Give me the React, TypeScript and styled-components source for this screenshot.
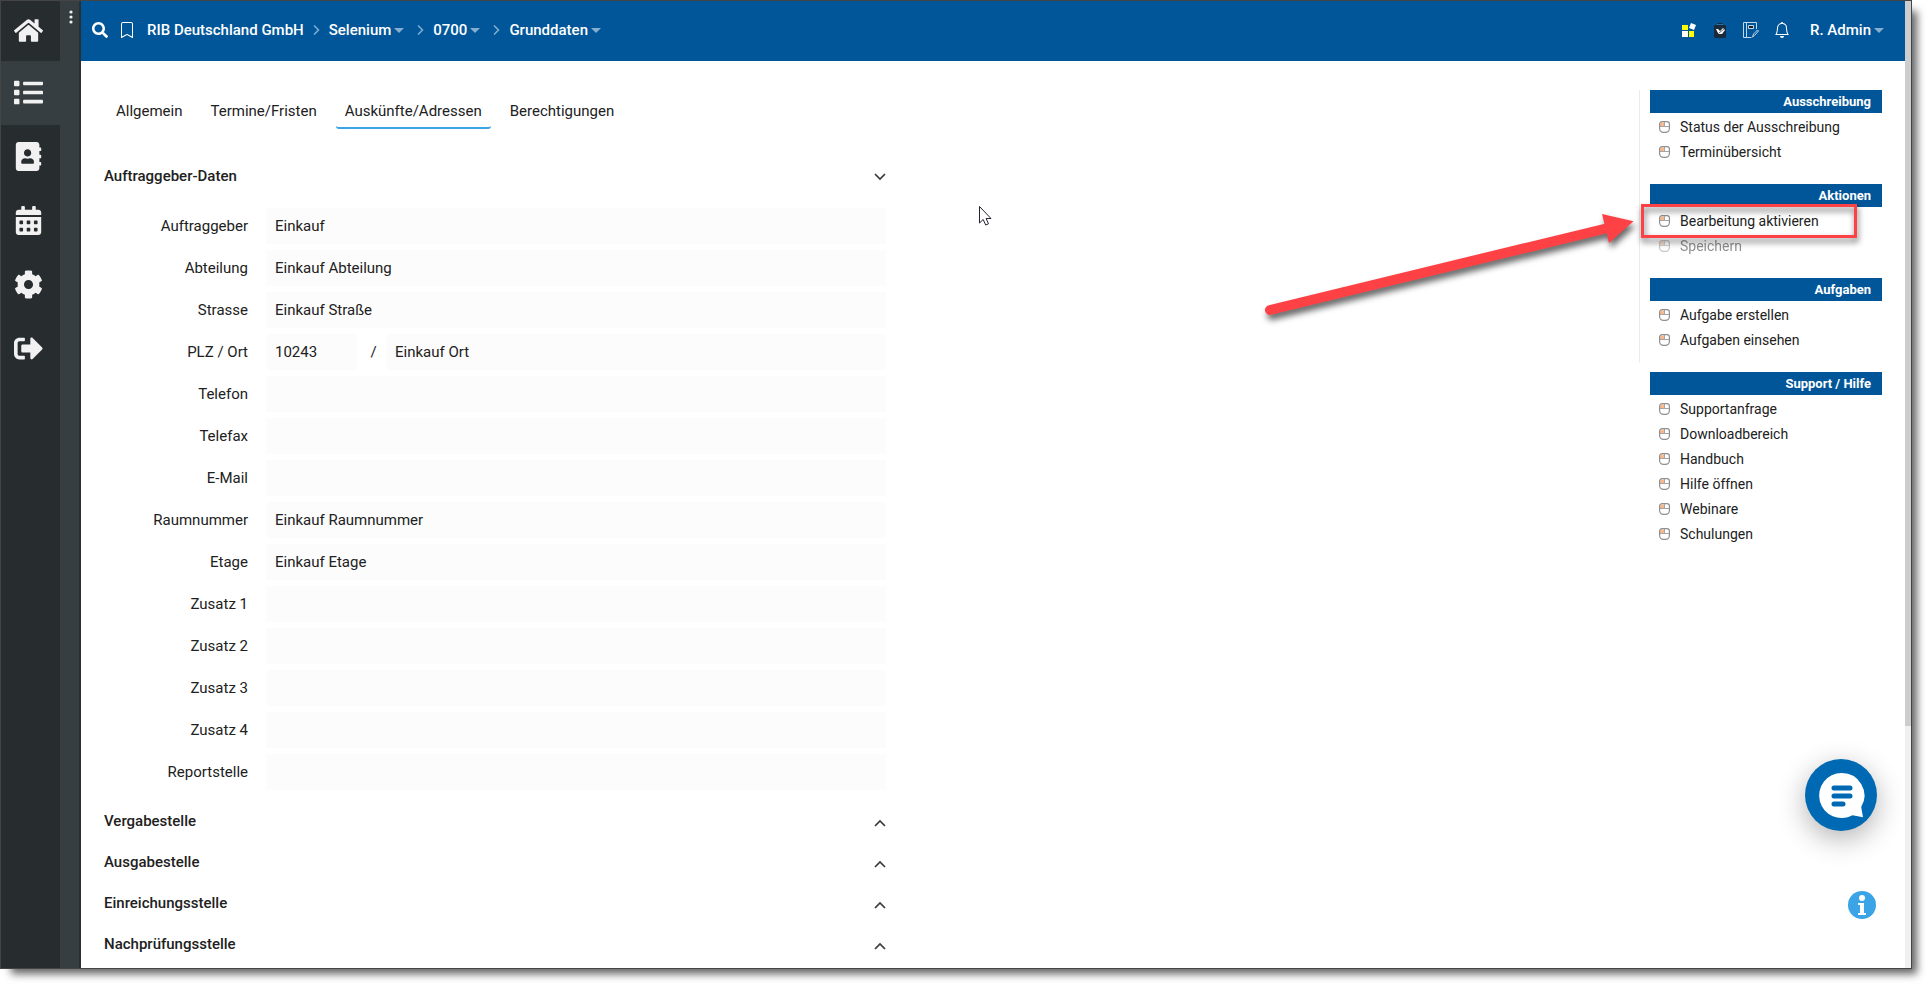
import React, { useState } from "react";
import styled, { createGlobalStyle } from "styled-components";
import {
  FaHome,
  FaList,
  FaAddressBook,
  FaCalendarAlt,
  FaCog,
  FaSignOutAlt,
  FaSearch,
} from "react-icons/fa";
import { BsBell, BsBookmark } from "react-icons/bs";

const color = {
  rail: "#272c2f",
  strip: "#373e41",
  brand: "#005699",
  text: "#212121",
  field: "#fcfcfc",
  accent: "#3aa4e6",
  marker: "#fe4144",
};

const GlobalStyle = createGlobalStyle`
  *, *::before, *::after { box-sizing: border-box; }
  body { margin: 0; background: #fff; color: ${color.text}; font: 15px/20px Roboto, "Liberation Sans", sans-serif; }
  button, input { font: inherit; color: inherit; }
  button { padding: 0; border: 0; background: none; cursor: pointer; }
  a { color: inherit; text-decoration: none; }
  svg { display: block; flex: none; }
  h2, ul { margin: 0; padding: 0; font: inherit; list-style: none; }
`;

const Page = styled.div`
  padding: 0 15px 15px 0;
  min-height: 100vh;
  display: flex;
  overflow: hidden;
`;

const Window = styled.div`
  position: relative;
  flex: 1;
  min-width: 0;
  display: flex;
  border: 1px solid #444;
  background: #fff;
  box-shadow: 8px 8px 8px -3px rgba(0, 0, 0, 0.6);
`;

const Rail = styled.nav`
  width: 59px;
  background: ${color.rail};
  display: flex;
  flex-direction: column;
`;

const RailLink = styled.a<{ $active?: boolean; $first?: boolean }>`
  height: ${(p) => (p.$first ? 60 : 64)}px;
  padding: 0 4px 2px 0;
  display: flex;
  align-items: center;
  justify-content: center;
  font-size: 29px;
  color: #f1f1f1;
  background: ${(p) => (p.$active ? color.strip : "transparent")};
`;

const Strip = styled.div`
  width: 21px;
  background: ${color.strip};
  border-right: 2px solid #2a2f32;
  padding: 9px 0 0 2px;
  display: flex;
  justify-content: center;
  align-items: flex-start;
  color: #f1f1f1;
`;

const Body = styled.div`
  flex: 1;
  min-width: 0;
`;

const Header = styled.header`
  height: 60px;
  padding: 0 17px 0 11px;
  background: ${color.brand};
  color: #fff;
  display: flex;
  align-items: center;
  justify-content: space-between;
  font-weight: 500;
`;

const HeaderGroup = styled.div<{ $gap: number }>`
  display: flex;
  align-items: center;
  gap: ${(p) => p.$gap}px;
  padding-bottom: 2px;
`;

const IconButton = styled.button<{ $size?: number }>`
  font-size: ${(p) => p.$size ?? 16}px;
  min-width: 16px;
  display: flex;
  justify-content: center;
`;

const Crumbs = styled.nav`
  display: flex;
  align-items: center;
  gap: 9px;
  padding-left: 1px;
`;

const CrumbLink = styled.a`
  display: flex;
  align-items: center;
  gap: 3px;
  padding-right: 4px;
`;

const UserLink = styled(CrumbLink)`
  padding-left: 5px;
`;

const Caret = styled.span`
  border: 5px solid transparent;
  border-top-color: #86aed0;
  border-bottom: 0;
`;

const Content = styled.div`
  position: relative;
  display: flex;
  justify-content: space-between;
  gap: 24px;
  padding: 0 23px;
`;

const Main = styled.main`
  flex: 1;
  max-width: 782px;
  padding-top: 32px;
`;

const Tabs = styled.div`
  display: flex;
  gap: 10px;
  padding-left: 3px;
  margin-bottom: 26px;
`;

const Tab = styled.button<{ $active: boolean }>`
  height: 36px;
  padding: 2px 9px 0;
  border-bottom: 2px solid ${(p) => (p.$active ? color.accent : "transparent")};
  border-radius: 3px;
`;

const SectionButton = styled.button`
  width: 100%;
  height: 41px;
  display: flex;
  align-items: center;
  justify-content: space-between;
  font-weight: 500;
`;

const Fields = styled.div`
  display: grid;
  gap: 6px;
  padding: 12px 0 10px;
`;

const FieldRow = styled.div`
  display: grid;
  grid-template-columns: 144px 1fr;
  column-gap: 18px;
  align-items: center;
`;

const Label = styled.label`
  text-align: right;
`;

const Input = styled.input`
  width: 100%;
  height: 36px;
  padding: 0 9px;
  border: 0;
  outline: 0;
  background: ${color.field};
`;

const Split = styled.div`
  display: grid;
  grid-template-columns: 91px 29px 1fr;
  align-items: center;
`;

const Slash = styled.span`
  padding-left: 4px;
  text-align: center;
`;

const Aside = styled.aside`
  width: 243px;
  padding-top: 29px;
  font-size: 14px;
`;

const RuledGroups = styled.div<{ $ruled?: boolean }>`
  display: grid;
  gap: 19px;
  padding: 0 0 10px 10px;
  margin-bottom: 9px;
  border-left: 1px solid ${(p) => (p.$ruled ? "#ececec" : "transparent")};
`;

const MenuTitle = styled.h2`
  height: 23px;
  line-height: 24px;
  margin-bottom: 2px;
  padding-right: 11px;
  background: ${color.brand};
  color: #fff;
  font-size: 13px;
  font-weight: 700;
  text-align: right;
`;

const MenuItem = styled.li`
  position: relative;
`;

const MenuLink = styled.a<{ $disabled?: boolean }>`
  height: 25px;
  padding: 0 0 1px 9px;
  display: flex;
  align-items: center;
  gap: 10px;
  opacity: ${(p) => (p.$disabled ? 0.5 : 1)};
`;

const Marker = styled.div`
  position: absolute;
  z-index: 1;
  inset: -5px 25px -4px -9px;
  border: 3px solid ${color.marker};
  filter: drop-shadow(1px 4px 3px rgba(0, 0, 0, 0.6));
  pointer-events: none;
`;

const Arrow = styled.svg`
  position: absolute;
  right: 100%;
  top: -9px;
  pointer-events: none;
  overflow: visible;
  filter: drop-shadow(2px 5px 3px rgba(0, 0, 0, 0.6));
`;

const Pointer = styled.svg`
  position: absolute;
  left: 898px;
  top: 145px;
  pointer-events: none;
`;

const ScrollTrack = styled.div`
  width: 6px;
  background: #f0f0f0;
`;

const ScrollThumb = styled.div`
  height: 75%;
  background: #cdcdcd;
`;

const ChatButton = styled.button`
  position: absolute;
  right: 34px;
  bottom: 137px;
  width: 72px;
  height: 72px;
  border-radius: 50%;
  background: #0069b4;
  box-shadow: 0 8px 28px rgba(0, 0, 0, 0.3);
`;

const InfoButton = styled.button`
  position: absolute;
  right: 35px;
  bottom: 49px;
  width: 28px;
  height: 28px;
`;

const AppsIcon = () => (
  <svg width="14" height="14" viewBox="0 0 14 14">
    <path fill="#ffff00" d="M0 2h6v5H0zM7 8h5v6H7z" />
    <path fill="#fff" d="M0 8h6v6H0zM9 0l5 2-2 5-5-2z" />
  </svg>
);

const TaskIcon = () => (
  <svg width="12" height="15" viewBox="0 0 12 15">
    <path fill="#1b2a3b" d="M0 3l1-1h2l1-2h4l1 2h2l1 1v11l-1 1H1l-1-1z" />
    <path d="M3 1.500h6" stroke="#2f6ea5" />
    <path fill="#fff" d="M2 6l2 0 2 2 3-3 2 2-3 4-3 0-1-1z" />
    <path d="M5 10l5-4" stroke="#1b2a3b" strokeWidth="0.700" />
  </svg>
);

const NotebookIcon = () => (
  <svg width="16" height="16" viewBox="0 0 16 16" fill="none" stroke="#c4d8e8">
    <path d="M13.500 7V.5H.5v15h8M3.500.5v15" />
    <path fill="#14202c" d="M5.500 3.500h5v3h-5z" />
    <path d="M9.500 15l1-3 4-4 1 1-4 4.500z" />
  </svg>
);

const ChevronRight = () => (
  <svg width="7" height="10" viewBox="0 0 7 10" fill="none" stroke="#86aed0" strokeWidth="1.500">
    <path d="M1 .5L5.500 5 1 9.500" />
  </svg>
);

const SectionChevron = ({ open }: { open: boolean }) => (
  <svg width="12" height="12" viewBox="0 0 12 12" fill="none" stroke="#3a3a3a" strokeWidth="1.700">
    <path d={open ? "M1 4l5 5 5-5" : "M1 11l5-5 5 5"} />
  </svg>
);

const MouseIcon = () => (
  <svg width="11" height="12" viewBox="0 0 11 12" fill="none">
    <path d="M2 1.500h3.500v4H1V3z" fill="#f9b98c" />
    <path d="M.6 3a2.400 2.400 0 0 1 2.400-2.400h5A2.400 2.400 0 0 1 10.400 3v4.500a3.900 3.900 0 0 1-3.900 3.900h-2A3.900 3.900 0 0 1 .6 7.500z" stroke="#8f8f8f" strokeWidth="1.200" />
    <path d="M1 5.500h9M5.500 1v4.500" stroke="#a5a5a5" />
  </svg>
);

const railItems = [
  { label: "Startseite", Icon: FaHome },
  { label: "Projekte", Icon: FaList },
  { label: "Adressbuch", Icon: FaAddressBook },
  { label: "Kalender", Icon: FaCalendarAlt },
  { label: "Einstellungen", Icon: FaCog },
  { label: "Abmelden", Icon: FaSignOutAlt },
];

const crumbs = ["RIB Deutschland GmbH", "Selenium", "0700", "Grunddaten"];
const tabs = ["Allgemein", "Termine/Fristen", "Auskünfte/Adressen", "Berechtigungen"];

const fields: { id: string; label: string; value: string; second?: string }[] = [
  { id: "auftraggeber", label: "Auftraggeber", value: "Einkauf" },
  { id: "abteilung", label: "Abteilung", value: "Einkauf Abteilung" },
  { id: "strasse", label: "Strasse", value: "Einkauf Straße" },
  { id: "plz", label: "PLZ / Ort", value: "10243", second: "Einkauf Ort" },
  { id: "telefon", label: "Telefon", value: "" },
  { id: "telefax", label: "Telefax", value: "" },
  { id: "email", label: "E-Mail", value: "" },
  { id: "raum", label: "Raumnummer", value: "Einkauf Raumnummer" },
  { id: "etage", label: "Etage", value: "Einkauf Etage" },
  { id: "zusatz1", label: "Zusatz 1", value: "" },
  { id: "zusatz2", label: "Zusatz 2", value: "" },
  { id: "zusatz3", label: "Zusatz 3", value: "" },
  { id: "zusatz4", label: "Zusatz 4", value: "" },
  { id: "report", label: "Reportstelle", value: "" },
];

const closedSections = ["Vergabestelle", "Ausgabestelle", "Einreichungsstelle", "Nachprüfungsstelle"];

type Group = { title: string; items: string[] };

const projectMenu: Group[] = [
  { title: "Ausschreibung", items: ["Status der Ausschreibung", "Terminübersicht"] },
  { title: "Aktionen", items: ["Bearbeitung aktivieren", "Speichern"] },
  { title: "Aufgaben", items: ["Aufgabe erstellen", "Aufgaben einsehen"] },
];

const supportMenu: Group[] = [
  {
    title: "Support / Hilfe",
    items: ["Supportanfrage", "Downloadbereich", "Handbuch", "Hilfe öffnen", "Webinare", "Schulungen"],
  },
];

const MenuGroups = ({ groups }: { groups: Group[] }) => (
  <>
    {groups.map((group) => (
      <section key={group.title}>
        <MenuTitle>{group.title}</MenuTitle>
        <ul>
          {group.items.map((item) => (
            <MenuItem key={item}>
              <MenuLink href="#" $disabled={item === "Speichern"}>
                <MouseIcon />
                {item}
              </MenuLink>
              {item === "Bearbeitung aktivieren" && (
                <>
                  <Marker />
                  <Arrow width="400" height="120" viewBox="1250 200 400 120">
                    <path d="M1270 310L1606 228.500" stroke={color.marker} strokeWidth="10" strokeLinecap="round" />
                    <path d="M1602 214l31.500 7.300L1609 243z" fill={color.marker} />
                  </Arrow>
                </>
              )}
            </MenuItem>
          ))}
        </ul>
      </section>
    ))}
  </>
);

export default function App() {
  const [tab, setTab] = useState("Auskünfte/Adressen");
  const [open, setOpen] = useState(true);

  return (
    <Page>
      <GlobalStyle />
      <Window>
        <Rail>
          {railItems.map(({ label, Icon }, i) => (
            <RailLink key={label} href="#" aria-label={label} $first={i === 0} $active={i === 1}>
              <Icon />
            </RailLink>
          ))}
        </Rail>
        <Strip>
          <button aria-label="Menü ausklappen">
            <svg width="4" height="14" viewBox="0 0 4 14" fill="currentColor">
              <circle cx="2" cy="2" r="1.600" />
              <circle cx="2" cy="7" r="1.600" />
              <circle cx="2" cy="12" r="1.600" />
            </svg>
          </button>
        </Strip>
        <Body>
          <Header>
            <HeaderGroup $gap={11}>
              <IconButton aria-label="Suche">
                <FaSearch />
              </IconButton>
              <IconButton aria-label="Lesezeichen">
                <BsBookmark />
              </IconButton>
              <Crumbs aria-label="Navigationspfad">
                {crumbs.map((crumb, i) => (
                  <React.Fragment key={crumb}>
                    {i > 0 && <ChevronRight />}
                    {i > 0 ? (
                      <CrumbLink href="#">
                        {crumb}
                        <Caret />
                      </CrumbLink>
                    ) : (
                      <a href="#">{crumb}</a>
                    )}
                  </React.Fragment>
                ))}
              </Crumbs>
            </HeaderGroup>
            <HeaderGroup $gap={15}>
              <IconButton aria-label="Anwendungen">
                <AppsIcon />
              </IconButton>
              <IconButton aria-label="Aufgaben">
                <TaskIcon />
              </IconButton>
              <IconButton aria-label="Notizen">
                <NotebookIcon />
              </IconButton>
              <IconButton aria-label="Benachrichtigungen">
                <BsBell />
              </IconButton>
              <UserLink href="#">
                R. Admin
                <Caret />
              </UserLink>
            </HeaderGroup>
          </Header>
          <Content>
            <Main>
              <Tabs role="tablist">
                {tabs.map((name) => (
                  <Tab key={name} role="tab" aria-selected={tab === name} $active={tab === name} onClick={() => setTab(name)}>
                    {name}
                  </Tab>
                ))}
              </Tabs>
              <h2>
                <SectionButton aria-expanded={open} onClick={() => setOpen(!open)}>
                  Auftraggeber-Daten
                  <SectionChevron open={open} />
                </SectionButton>
              </h2>
              {open && (
                <Fields>
                  {fields.map((f) => (
                    <FieldRow key={f.id}>
                      <Label htmlFor={f.id}>{f.label}</Label>
                      {f.second ? (
                        <Split>
                          <Input id={f.id} readOnly defaultValue={f.value} />
                          <Slash>/</Slash>
                          <Input aria-label="Ort" readOnly defaultValue={f.second} />
                        </Split>
                      ) : (
                        <Input id={f.id} readOnly defaultValue={f.value} />
                      )}
                    </FieldRow>
                  ))}
                </Fields>
              )}
              {closedSections.map((name) => (
                <h2 key={name}>
                  <SectionButton aria-expanded={false}>
                    {name}
                    <SectionChevron open={false} />
                  </SectionButton>
                </h2>
              ))}
            </Main>
            <Aside>
              <RuledGroups $ruled>
                <MenuGroups groups={projectMenu} />
              </RuledGroups>
              <RuledGroups>
                <MenuGroups groups={supportMenu} />
              </RuledGroups>
            </Aside>
            <Pointer width="13" height="20" viewBox="0 0 13 20">
              <path
                d="M.5.500v16.500l3.700-3.500 2.500 5.500 2.800-1.200-2.400-5.300h4.900z"
                fill="#fff"
                stroke="#23232f"
              />
            </Pointer>
          </Content>
        </Body>
        <ScrollTrack>
          <ScrollThumb />
        </ScrollTrack>
        <ChatButton aria-label="Chat öffnen">
          <svg width="72" height="72" viewBox="0 0 72 72">
            <path fill="#fff" d="M36.500 14a22.500 22.500 0 1 0 11 42.200l10.500 2-1.800-10.200A22.500 22.500 0 0 0 36.500 14z" />
            <path d="M29 29h16M29 37h16M29 45h9" stroke="#0069b4" strokeWidth="5" strokeLinecap="round" />
          </svg>
        </ChatButton>
        <InfoButton aria-label="Information">
          <svg width="28" height="28" viewBox="0 0 28 28">
            <circle cx="14" cy="14" r="14" fill={color.accent} />
            <circle cx="14" cy="7" r="3" fill="#fff" />
            <path fill="#fff" d="M10 12h6v10h2v2h-8v-2h2v-8h-2z" />
          </svg>
        </InfoButton>
      </Window>
    </Page>
  );
}
